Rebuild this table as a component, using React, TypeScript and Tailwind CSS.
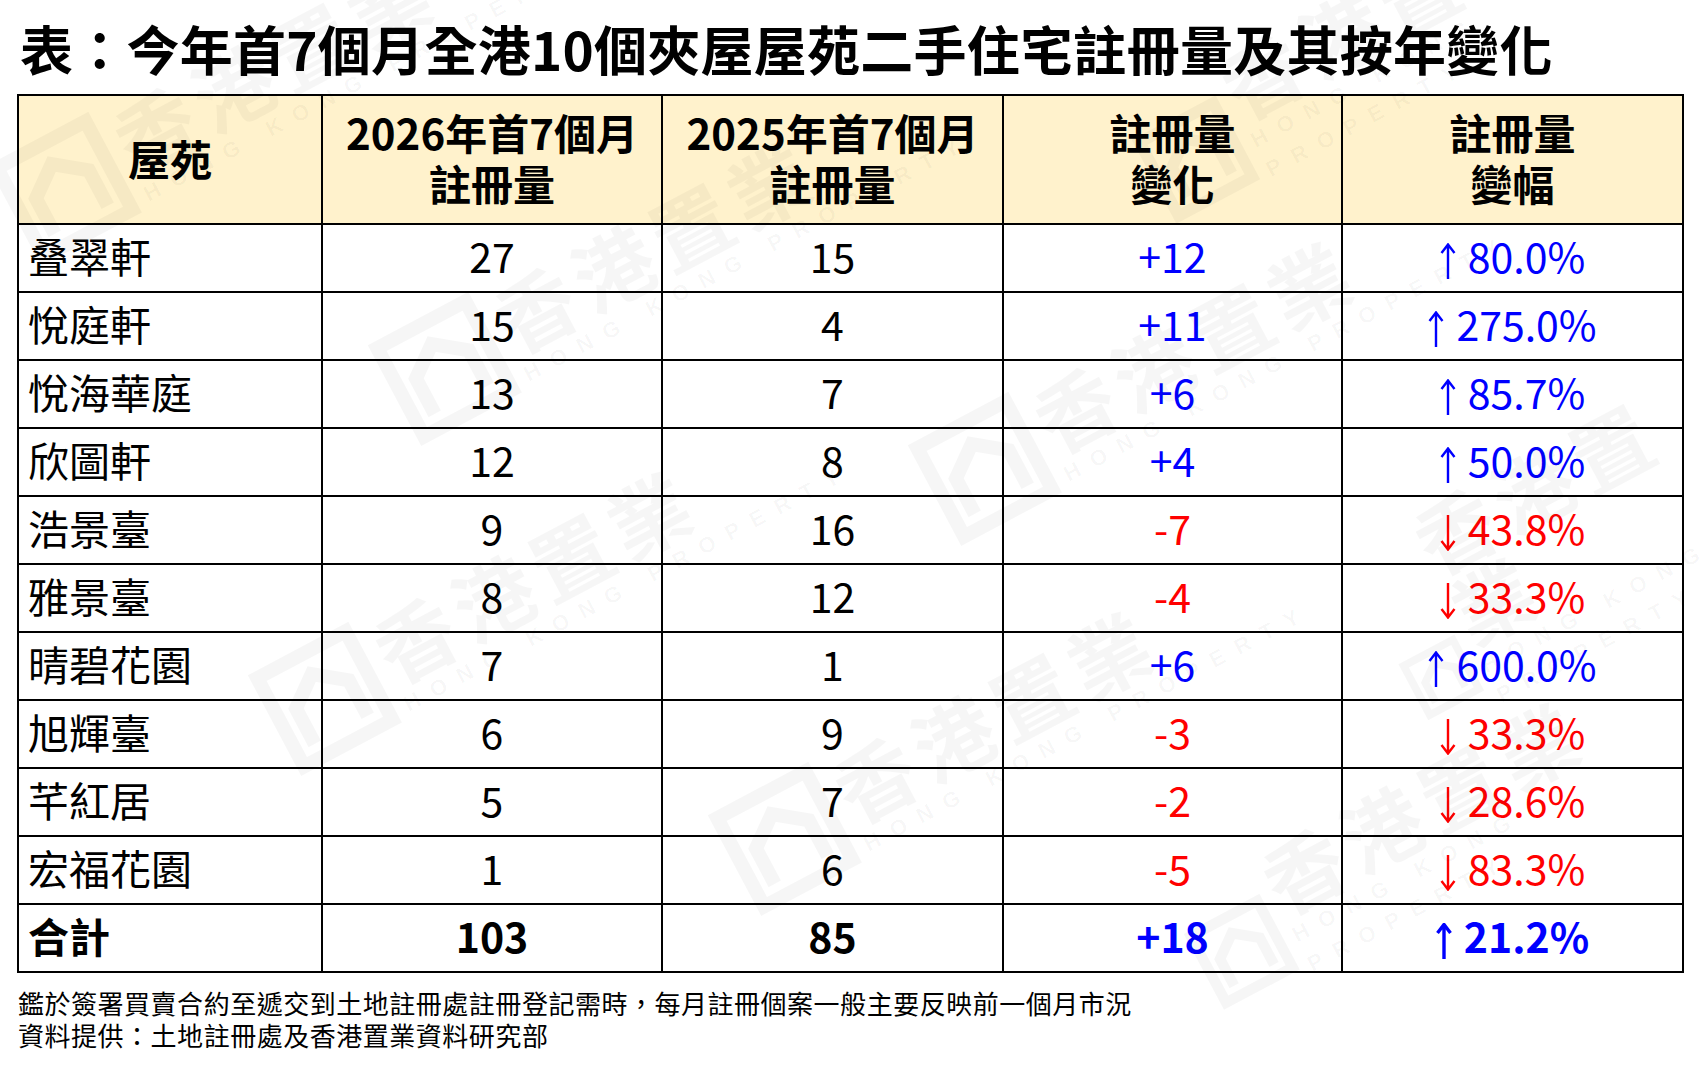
import React from 'react';

// ---- 資料 ----

type Row = { name: string; y2026: number; y2025: number };

const ROWS: Row[] = [
  { name: '叠翠軒', y2026: 27, y2025: 15 },
  { name: '悅庭軒', y2026: 15, y2025: 4 },
  { name: '悅海華庭', y2026: 13, y2025: 7 },
  { name: '欣圖軒', y2026: 12, y2025: 8 },
  { name: '浩景臺', y2026: 9, y2025: 16 },
  { name: '雅景臺', y2026: 8, y2025: 12 },
  { name: '晴碧花園', y2026: 7, y2025: 1 },
  { name: '旭輝臺', y2026: 6, y2025: 9 },
  { name: '芊紅居', y2026: 5, y2025: 7 },
  { name: '宏福花園', y2026: 1, y2025: 6 },
];

// 水印位置 (left, top)
const MARKS: [number, number][] = [
  [40, 150],
  [420, 330],
  [960, 430],
  [300, 660],
  [760, 800],
  [1230, 880],
  [1180, 90],
  [1440, 520],
];

const FONT = "font-['Noto_Sans_CJK_TC','Noto_Sans',sans-serif]";

const Watermark: React.FC<{ left: number; top: number }> = ({ left, top }) => (
  <div
    className="absolute pointer-events-none flex items-end gap-2 rotate-[-28deg] origin-bottom-left text-black/[0.035]"
    style={{ left, top }}
  >
    <svg width="120" height="120" viewBox="0 0 120 120" fill="none" stroke="currentColor" strokeWidth="14">
      <path d="M10 110 V10 H110 V110 Z" />
      <path d="M30 95 V55 L60 32 L90 55 V95" />
    </svg>
    <div className="flex flex-col">
      <span className="text-[80px] font-bold leading-none tracking-[0.1em]">香港置業</span>
      <span className="text-[22px] font-bold tracking-[0.6em] font-['Liberation_Sans',sans-serif]">HONG KONG PROPERTY</span>
    </div>
  </div>
);

const fmtDiff = (d: number) => (d > 0 ? `+${d}` : `${d}`);

// 細長箭頭
const Arrow: React.FC<{ up: boolean; bold?: boolean }> = ({ up, bold }) => (
  <svg
    width="16"
    height="36"
    viewBox="0 0 16 36"
    fill="none"
    stroke="currentColor"
    strokeWidth={bold ? 3.4 : 2.4}
    className="block translate-y-[6px] mr-[12px]"
  >
    {up ? (
      <path d="M8 1.5 V36 M1.5 10 L8 1.5 L14.5 10" />
    ) : (
      <path d="M8 0 V34.5 M1.5 26 L8 34.5 L14.5 26" />
    )}
  </svg>
);

const Pct: React.FC<{ a: number; b: number; bold?: boolean }> = ({ a, b, bold }) => {
  const d = a - b;
  const pct = Math.abs((d / b) * 100).toFixed(1);
  return (
    <span className="inline-flex items-baseline whitespace-nowrap">
      <Arrow up={d >= 0} bold={bold} />
      <span>{pct}%</span>
    </span>
  );
};

const App: React.FC = () => {
  const total26 = ROWS.reduce((s, r) => s + r.y2026, 0);
  const total25 = ROWS.reduce((s, r) => s + r.y2025, 0);
  const cell = 'border-2 border-black pb-[5px]';

  return (
    <div className={`relative w-[1707px] h-[1066px] bg-white overflow-hidden text-black ${FONT}`}>
      <div className="pl-[20px] pt-[16px] h-[94px]">
        <h1 className="text-[53px] font-bold leading-[64px] tracking-[0.005em] whitespace-nowrap">
          表：今年首7個月全港10個夾屋屋苑二手住宅註冊量及其按年變化
        </h1>
      </div>

      <table className="ml-[17px] w-[1665px] border-collapse table-fixed">
        <colgroup>
          <col className="w-[304px]" />
          <col className="w-[340px]" />
          <col className="w-[341px]" />
          <col className="w-[339px]" />
          <col className="w-[341px]" />
        </colgroup>
        <thead>
          <tr className="h-[129px] bg-[#fff2cc] text-[42px] font-bold leading-[51px]">
            <th className={cell}>屋苑</th>
            <th className={cell}>2026年首7個月<br />註冊量</th>
            <th className={cell}>2025年首7個月<br />註冊量</th>
            <th className={cell}>註冊量<br />變化</th>
            <th className={cell}>註冊量<br />變幅</th>
          </tr>
        </thead>
        <tbody className="text-[41px] leading-none">
          {ROWS.map((r) => {
            const d = r.y2026 - r.y2025;
            const color = d >= 0 ? 'text-[#0000ff]' : 'text-[#ff0000]';
            return (
              <tr key={r.name} className="h-[68px]">
                <td className={`${cell} pl-[9px]`}>{r.name}</td>
                <td className={`${cell} text-center`}>{r.y2026}</td>
                <td className={`${cell} text-center`}>{r.y2025}</td>
                <td className={`${cell} text-center ${color}`}>{fmtDiff(d)}</td>
                <td className={`${cell} text-center ${color}`}><Pct a={r.y2026} b={r.y2025} /></td>
              </tr>
            );
          })}
          <tr className="h-[68px] font-bold">
            <td className={`${cell} pl-[9px]`}>合計</td>
            <td className={`${cell} text-center`}>{total26}</td>
            <td className={`${cell} text-center`}>{total25}</td>
            <td className={`${cell} text-center text-[#0000ff]`}>{fmtDiff(total26 - total25)}</td>
            <td className={`${cell} text-center text-[#0000ff]`}><Pct a={total26} b={total25} bold /></td>
          </tr>
        </tbody>
      </table>

      <div className="pl-[18px] pt-[14px] text-[26px] leading-[32px] tracking-[0.02em]">
        <p>鑑於簽署買賣合約至遞交到土地註冊處註冊登記需時，每月註冊個案一般主要反映前一個月市況</p>
        <p>資料提供：土地註冊處及香港置業資料研究部</p>
      </div>

      {MARKS.map(([l, t], i) => (
        <Watermark key={i} left={l} top={t} />
      ))}
    </div>
  );
};

export default App;
